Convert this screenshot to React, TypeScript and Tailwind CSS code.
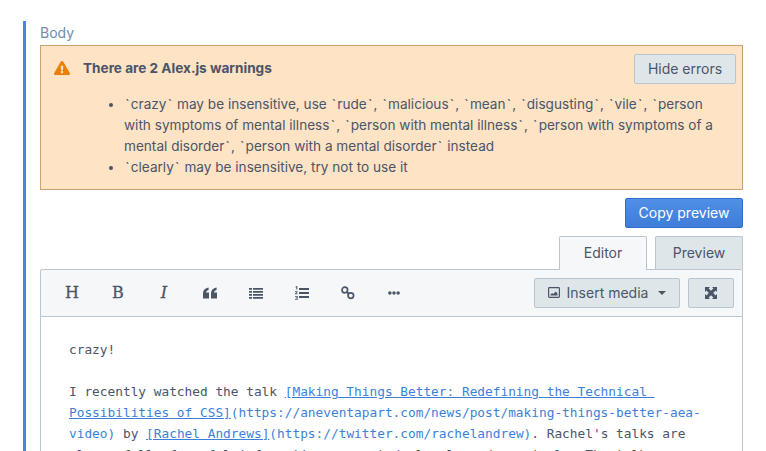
import React from "react";
import { FaEllipsisH, FaExclamationTriangle } from "react-icons/fa";

const mono = "font-['DejaVu_Sans_Mono',monospace]";
const serif = "font-['DejaVu_Serif',serif] text-[16px] [-webkit-text-stroke:0.3px_#4a5568]";

function Tool({ children }: { children: React.ReactNode }) {
  return <div className="w-[46px] h-[30px] flex items-center justify-center text-[#4a5568]">{children}</div>;
}

function Ticked({ text }: { text: string }) {
  const parts = text.split("`");
  return (
    <div>
      {parts.map((p, i) => (
        <React.Fragment key={i}>
          {i > 0 && <span className="px-[1.2px]">`</span>}
          {p}
        </React.Fragment>
      ))}
    </div>
  );
}

export default function App() {
  return (
    <div className="w-[766px] h-[451px] overflow-hidden bg-white pt-[21px] pl-[23px] font-['Inter',sans-serif] text-[14px] text-[#4a5568]">
      <div className="w-[720px] h-[500px] border-l-[3px] border-[#4a86e0] pl-[14px]">
        <div className="h-[24px] leading-[24px] text-[#718ba8]">Body</div>
        <div className="h-[145px] border border-[#c9a26f] bg-[#fee3c4] pt-2 pr-[6px]">
          <div className="flex items-center h-[30px] pl-[13px]">
            <FaExclamationTriangle className="text-[#ed8004] w-4 h-4 mb-[2px]" />
            <div className="ml-[13px] font-bold text-[13.6px] flex-1 pb-[2px]">There are 2 Alex.js warnings</div>
            <button className="w-[102px] h-[30px] pb-[1px] rounded-[2px] border border-[#b8c6d2] bg-[#dfe6e9] text-[#4a5568]">Hide errors</button>
          </div>
          <ul className="list-disc mt-[10px] pl-[83px] pr-[10px] text-[13.6px] leading-[21px]">
            <li>
              <Ticked text="`crazy` may be insensitive, use `rude`, `malicious`, `mean`, `disgusting`, `vile`, `person" />
              <Ticked text="with symptoms of mental illness`, `person with mental illness`, `person with symptoms of a" />
              <Ticked text="mental disorder`, `person with a mental disorder` instead" />
            </li>
            <li><Ticked text="`clearly` may be insensitive, try not to use it" /></li>
          </ul>
        </div>
        <div className="flex justify-end mt-2">
          <button className="w-[118px] h-[30px] pb-[1px] rounded-[2px] border border-[#2f6fc9] bg-gradient-to-b from-[#4f8fe8] to-[#3f7dd8] text-white">Copy preview</button>
        </div>
        <div className="flex justify-end gap-2 mt-2 h-[33px]">
          <div className="w-[88px] h-[34px] pb-[2px] border border-[#b8c6d2] border-b-0 rounded-t-[2px] bg-[#f6f7f9] z-10 flex items-center justify-center">Editor</div>
          <div className="w-[88px] h-[33px] pb-[1px] border border-[#b8c6d2] border-b-0 rounded-t-[2px] bg-[#dfe6e9] flex items-center justify-center">Preview</div>
        </div>
        <div className="h-[48px] border border-[#b8c6d2] bg-[#f6f7f9] flex items-center pl-[8px] pr-2 rounded-t-[2px]">
          <Tool><span className={serif}>H</span></Tool>
          <Tool><span className={serif}>B</span></Tool>
          <Tool><span className={`${serif} italic`}>I</span></Tool>
          <Tool>
            <svg width="14" height="12" viewBox="0 0 14 11" fill="#4a5568" className="mb-[1px]">
              <path d="M0 6C0 2.6 2 .6 5.6 0v2.4C4 2.9 3.1 3.8 3 5h3v6H0Z" />
              <path d="M8 6C8 2.6 10 .6 13.6 0v2.4C12 2.9 11.1 3.8 11 5h3v6H8Z" />
            </svg>
          </Tool>
          <Tool>
            <svg width="14" height="11" viewBox="0 0 14 11" fill="#4a5568">
              <path d="M0 0h3v1.7H0zM4 0h10v1.7H4zM0 3h3v1.7H0zM4 3h10v1.7H4zM0 6h3v1.7H0zM4 6h10v1.7H4zM0 9h3v1.7H0zM4 9h10v1.7H4z" />
            </svg>
          </Tool>
          <Tool>
            <svg width="14" height="14" viewBox="0 0 14 14" fill="#4a5568">
              <path d="M4 2h10v2H4zM4 6h10v2H4zM4 10h10v2H4z" />
              <path d="M0.5 .8 1.5 0h.8v3.6h-1V1.2l-.8.4ZM0 5.2h2.6v.8L1.2 7.4h1.5v.8H0v-.8L1.5 6H0ZM0 10h2.7v3.8H0V13h1.8v-.7H.6v-.7h1.2v-.8H0Z" />
            </svg>
          </Tool>
          <Tool>
            <svg width="14" height="14" viewBox="0 0 14 14" fill="none" stroke="#4a5568">
              <circle cx="3.8" cy="4" r="2.8" strokeWidth="1.7" />
              <circle cx="9.8" cy="9.6" r="2.8" strokeWidth="1.7" />
              <path d="M5.5 5.7 8 8" strokeWidth="2" />
            </svg>
          </Tool>
          <Tool><FaEllipsisH className="w-3 h-3" /></Tool>
          <div className="flex-1" />
          <button className="w-[146px] h-[30px] pb-[1px] rounded-[2px] border border-[#b8c6d2] bg-[#dfe6e9] flex items-center justify-center gap-[7px]">
            <svg width="12" height="11" viewBox="0 0 12 11" fill="none">
              <rect x=".6" y=".6" width="10.8" height="9.8" rx=".8" stroke="#4a5568" strokeWidth="1.2" />
              <path d="M2.5 8.6V7.4l1.6-1.3 1.2 1L7.7 4.6l1.8 2v2Z" fill="#4a5568" />
            </svg>
            <span>Insert media</span>
            <span className="ml-[3px] w-0 h-0 border-x-[4px] border-x-transparent border-t-[4px] border-t-[#4a5568]" />
          </button>
          <button className="ml-2 w-[46px] h-[30px] rounded-[2px] border border-[#b8c6d2] bg-[#dfe6e9] flex items-center justify-center">
            <svg width="12" height="12" viewBox="0 0 12 12" fill="#4a5568" stroke="none">
              <path d="M0 0h5L3.6 1.4 6 3.8 8.4 1.4 7 0h5v5l-1.4-1.4L8.2 6l2.4 2.4L12 7v5H7l1.4-1.4L6 8.2 3.6 10.6 5 12H0V7l1.4 1.4L3.8 6 1.4 3.6 0 5Z" />
            </svg>
          </button>
        </div>
        <div className={`h-[200px] border-x border-[#b8c6d2] pt-[22px] pl-[28px] pr-[28px] text-[12.8px] leading-[21px] whitespace-pre ${mono}`}>
          <div>crazy!</div>
          <div className="h-[21px]" />
          <div>I recently watched the talk <span className="text-[#3d7fd9] underline">[Making Things Better: Redefining the Technical </span></div>
          <div className="text-[#3d7fd9]"><span className="underline">Possibilities of CSS]</span>(https://aneventapart.com/news/post/making-things-better-aea-</div>
          <div><span className="text-[#3d7fd9]">video)</span> by <span className="text-[#3d7fd9] underline">[Rachel Andrews]</span><span className="text-[#3d7fd9]">(https://twitter.com/rachelandrew)</span>. Rachel's talks are</div>
          <div>always full of useful information presented clearly and concisely. The talk</div>
        </div>
      </div>
    </div>
  );
}
